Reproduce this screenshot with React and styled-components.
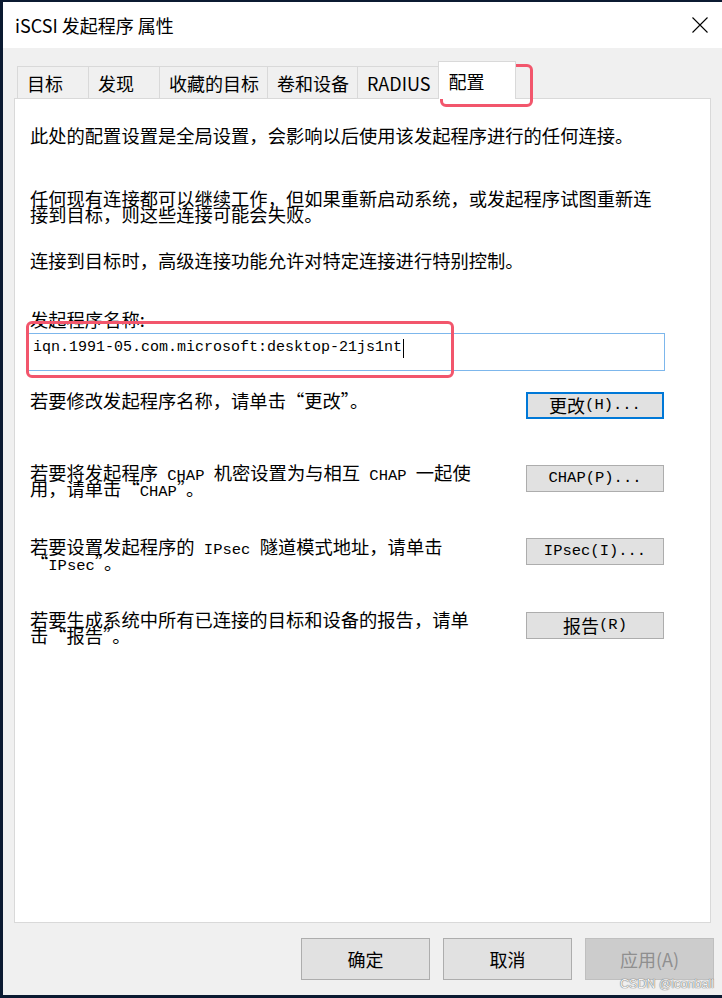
import styled, { createGlobalStyle } from 'styled-components';

const GlobalStyle = createGlobalStyle`
  html, body {
    margin: 0;
    padding: 0;
    background: #0b1a31;
  }
  body {
    font-family: "Noto Sans CJK SC", "Noto Sans", sans-serif;
    color: #000;
  }
`;

const Window = styled.div`
  position: relative;
  margin: 2px 0 0 3px;
  width: 719px;
  height: 993px;
  background: #f0f0f0;
  display: flex;
  flex-direction: column;
`;

const TitleBar = styled.div`
  height: 46px;
  flex: none;
  background: #fff;
  display: flex;
  align-items: center;
  justify-content: space-between;
  padding: 0 14px 0 12px;
  box-sizing: border-box;
`;

const Title = styled.span`
  font-size: 18px;
  line-height: 20px;
`;

const Body = styled.div`
  padding: 13px 11px 0 11px;
  display: flex;
  flex-direction: column;
`;

const TabStrip = styled.div`
  height: 37px;
  display: flex;
  align-items: flex-end;
  padding-left: 3px;
`;

const Tab = styled.div`
  box-sizing: border-box;
  min-width: ${({ $active }) => ($active ? '78px' : '71px')};
  height: ${({ $active }) => ($active ? '38px' : '32px')};
  margin-bottom: ${({ $active }) => ($active ? '-1px' : '0')};
  padding: 0 8px 0 9px;
  display: flex;
  align-items: center;
  font-size: 18px;
  line-height: 20px;
  background: ${({ $active }) => ($active ? '#fff' : '#f0f0f0')};
  border: 1px solid #d9d9d9;
  border-bottom: none;
  border-right: ${({ $active }) => ($active ? '1px solid #d9d9d9' : 'none')};
  position: relative;
  z-index: ${({ $active }) => ($active ? 1 : 0)};
`;

const Panel = styled.div`
  box-sizing: border-box;
  height: 825px;
  flex: none;
  background: #fff;
  border: 1px solid #d9d9d9;
  padding: 28px 46px 0 15px;
  display: flex;
  flex-direction: column;
`;

const Text = styled.div`
  font-size: 18.3px;
  line-height: 16.5px;
  margin-top: ${({ $gap }) => $gap || 0}px;
  white-space: nowrap;
`;

const Mono = styled.span`
  font-family: "Liberation Mono", monospace;
  font-size: 15.5px;
  line-height: 0;
`;

const NameInput = styled.div`
  box-sizing: border-box;
  margin: 5px 0 0 -2px;
  width: 637px;
  height: 38px;
  border: 1px solid #7db7ec;
  display: flex;
  align-items: center;
  padding: 0 0 7px 4px;
  font-family: "Liberation Mono", monospace;
  font-size: 15px;
  line-height: 18px;
`;

const Caret = styled.span`
  display: inline-block;
  width: 1px;
  height: 19px;
  background: #000;
  margin-left: 1px;
`;

const Row = styled.div`
  display: flex;
  justify-content: space-between;
  align-items: flex-start;
  margin-top: ${({ $gap }) => $gap}px;
`;

const SideButton = styled.div`
  box-sizing: border-box;
  width: 138px;
  height: 27px;
  flex: none;
  margin-top: ${({ $offset }) => $offset || 0}px;
  background: #e1e1e1;
  border: ${({ $focused }) => ($focused ? '2px solid #0078d7' : '1px solid #adadad')};
  display: flex;
  align-items: center;
  justify-content: center;
  font-size: 18px;
  line-height: 20px;
`;

const Footer = styled.div`
  display: flex;
  justify-content: flex-end;
  gap: 13px;
  margin: 15px -3px 0 0;
`;

const DialogButton = styled.div`
  box-sizing: border-box;
  width: 129px;
  height: 42px;
  display: flex;
  align-items: center;
  justify-content: center;
  font-size: 18px;
  background: ${({ $disabled }) => ($disabled ? '#cccccc' : '#e1e1e1')};
  border: 1px solid ${({ $disabled }) => ($disabled ? '#bfbfbf' : '#adadad')};
  color: ${({ $disabled }) => ($disabled ? '#8f8f8f' : '#000')};
`;

const Highlight = styled.div`
  position: absolute;
  box-sizing: border-box;
  border: 3px solid #f2566c;
  border-radius: 6px;
  left: ${({ $x }) => $x}px;
  top: ${({ $y }) => $y}px;
  width: ${({ $w }) => $w}px;
  height: ${({ $h }) => $h}px;
  pointer-events: none;
`;

const Watermark = styled.div`
  position: absolute;
  right: 8px;
  bottom: 4px;
  font-family: "Liberation Sans", sans-serif;
  font-size: 12.5px;
  color: #f2f2f2;
  text-shadow: 0 0 1px #666, 0 0 1px #666;
`;

const CloseIcon = () => (
  <svg width="16" height="16" viewBox="0 0 16 16">
    <path d="M0.5 0.5 L15.5 15.5 M15.5 0.5 L0.5 15.5" stroke="#000" strokeWidth="1.1" fill="none" />
  </svg>
);

const tabs = ['目标', '发现', '收藏的目标', '卷和设备', 'RADIUS', '配置'];

export default function App() {
  return (
    <>
      <GlobalStyle />
      <Window>
        <TitleBar>
          <Title>iSCSI 发起程序 属性</Title>
          <CloseIcon />
        </TitleBar>
        <Body>
          <TabStrip>
            {tabs.map((t) => (
              <Tab key={t} $active={t === '配置'}>{t}</Tab>
            ))}
          </TabStrip>
          <Panel>
            <Text>此处的配置设置是全局设置，会影响以后使用该发起程序进行的任何连接。</Text>
            <Text $gap={46}>
              任何现有连接都可以继续工作，但如果重新启动系统，或发起程序试图重新连
              <br />
              接到目标，则这些连接可能会失败。
            </Text>
            <Text $gap={29}>连接到目标时，高级连接功能允许对特定连接进行特别控制。</Text>
            <Text $gap={43}>发起程序名称:</Text>
            <NameInput>
              iqn.1991-05.com.microsoft:desktop-21js1nt
              <Caret />
            </NameInput>
            <Row $gap={21}>
              <Text>若要修改发起程序名称，请单击“更改”。</Text>
              <SideButton $focused>
                更改<Mono>(H)...</Mono>
              </SideButton>
            </Row>
            <Row $gap={45}>
              <Text>
                若要将发起程序<Mono> CHAP </Mono>机密设置为与相互<Mono> CHAP </Mono>一起使
                <br />
                用，请单击“<Mono>CHAP</Mono>”。
              </Text>
              <SideButton $offset={1}>
                <Mono>CHAP(P)...</Mono>
              </SideButton>
            </Row>
            <Row $gap={41}>
              <Text>
                若要设置发起程序的<Mono> IPsec </Mono>隧道模式地址，请单击
                <br />
                “<Mono>IPsec</Mono>”。
              </Text>
              <SideButton>
                <Mono>IPsec(I)...</Mono>
              </SideButton>
            </Row>
            <Row $gap={40}>
              <Text>
                若要生成系统中所有已连接的目标和设备的报告，请单
                <br />
                击“报告”。
              </Text>
              <SideButton $offset={1}>
                报告<Mono>(R)</Mono>
              </SideButton>
            </Row>
          </Panel>
          <Footer>
            <DialogButton>确定</DialogButton>
            <DialogButton>取消</DialogButton>
            <DialogButton $disabled>应用(A)</DialogButton>
          </Footer>
        </Body>
        <Highlight $x={437} $y={62} $w={93} $h={43} />
        <Highlight $x={23} $y={319} $w={428} $h={57} />
        <Watermark>CSDN @iconball</Watermark>
      </Window>
    </>
  );
}
